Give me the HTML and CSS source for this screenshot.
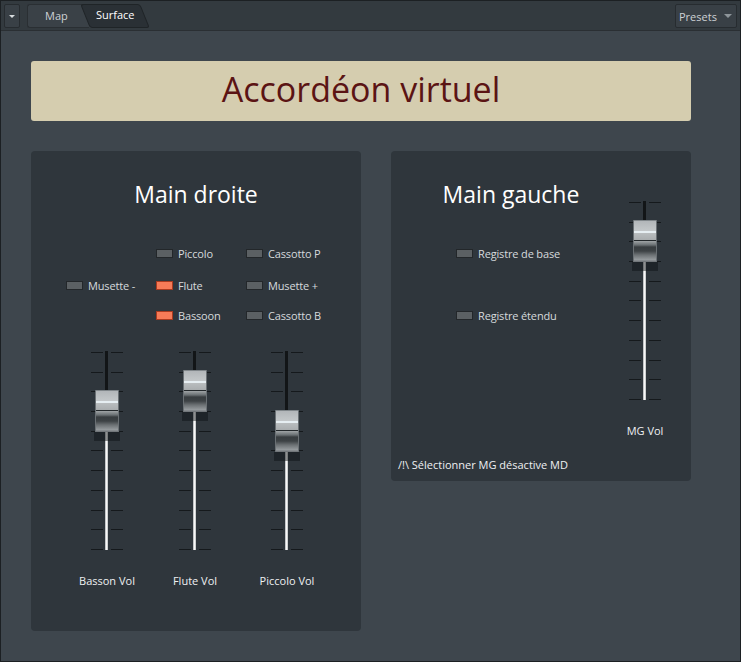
FILE: index.html
```html
<!DOCTYPE html>
<html lang="fr">
<head>
<meta charset="utf-8">
<title>Accordéon virtuel</title>
<link rel="stylesheet" href="styles.css">
</head>
<body>
<div class="window">
  <header class="topbar">
    <button class="menu-btn"><span class="caret"></span></button>
    <nav class="tabs">
      <div class="tab">Map</div>
      <div class="tab active"><span>Surface</span></div>
    </nav>
    <div class="spacer"></div>
    <button class="presets"><span>Presets</span><span class="caret"></span></button>
  </header>

  <main class="main">
    <div class="banner">Accordéon virtuel</div>

    <div class="panels">
      <section class="panel panel-left">
        <h2 class="panel-title">Main droite</h2>
        <div class="switches">
          <div class="sw" style="grid-column:1;grid-row:2"><span class="box"></span>Musette -</div>
          <div class="sw" style="grid-column:2;grid-row:1"><span class="box"></span>Piccolo</div>
          <div class="sw" style="grid-column:2;grid-row:2"><span class="box on"></span>Flute</div>
          <div class="sw" style="grid-column:2;grid-row:3"><span class="box on"></span>Bassoon</div>
          <div class="sw" style="grid-column:3;grid-row:1"><span class="box"></span>Cassotto P</div>
          <div class="sw" style="grid-column:3;grid-row:2"><span class="box"></span>Musette +</div>
          <div class="sw" style="grid-column:3;grid-row:3"><span class="box"></span>Cassotto B</div>
        </div>
        <div class="faders">
          <div class="fader-col">
            <div class="fader">
              <div class="ticks"><i></i><i></i><i></i><i></i><i></i><i></i><i></i><i></i><i></i><i></i><i></i></div>
              <div class="track" style="--v:39px"></div>
              <div class="cap" style="top:39px"></div>
            </div>
            <div class="fader-label">Basson Vol</div>
          </div>
          <div class="fader-col">
            <div class="fader">
              <div class="ticks"><i></i><i></i><i></i><i></i><i></i><i></i><i></i><i></i><i></i><i></i><i></i></div>
              <div class="track" style="--v:19px"></div>
              <div class="cap" style="top:19px"></div>
            </div>
            <div class="fader-label">Flute Vol</div>
          </div>
          <div class="fader-col">
            <div class="fader">
              <div class="ticks"><i></i><i></i><i></i><i></i><i></i><i></i><i></i><i></i><i></i><i></i><i></i></div>
              <div class="track" style="--v:59px"></div>
              <div class="cap" style="top:59px"></div>
            </div>
            <div class="fader-label">Piccolo Vol</div>
          </div>
        </div>
      </section>

      <section class="panel panel-right">
        <div class="right-row">
          <div class="right-main">
            <h2 class="panel-title">Main gauche</h2>
            <div class="switches-mg">
              <div class="sw"><span class="box"></span>Registre de base</div>
              <div class="sw"><span class="box"></span>Registre étendu</div>
            </div>
          </div>
          <div class="fader-col mg">
            <div class="fader">
              <div class="ticks"><i></i><i></i><i></i><i></i><i></i><i></i><i></i><i></i><i></i><i></i><i></i></div>
              <div class="track" style="--v:19px"></div>
              <div class="cap" style="top:19px"></div>
            </div>
            <div class="fader-label">MG Vol</div>
          </div>
        </div>
        <p class="note">/!\ Sélectionner MG désactive MD</p>
      </section>
    </div>
  </main>
</div>
</body>
</html>
```

FILE: styles.css
```css
* { box-sizing: border-box; }

html, body {
  margin: 0;
  padding: 0;
  background: #3e464d;
}

body {
  font-family: "Open Sans", "Noto Sans", "DejaVu Sans", sans-serif;
  color: #e4e7ea;
}

.window {
  width: 741px;
  height: 662px;
  border: 1px solid #1c2023;
  background: #3e464d;
  display: flex;
  flex-direction: column;
}

/* ---------- top bar ---------- */
.topbar {
  height: 30px;
  flex: none;
  background: #333a3f;
  border-bottom: 1px solid #2a2f33;
  display: flex;
  align-items: flex-start;
  padding: 3px 3px 0 3px;
}

.menu-btn {
  width: 16px;
  height: 24px;
  padding: 0;
  margin: 0;
  background: #394046;
  border: 1px solid #272c30;
  border-radius: 2px;
  display: flex;
  align-items: center;
  justify-content: center;
}

.caret {
  width: 0;
  height: 0;
  border-left: 3px solid transparent;
  border-right: 3px solid transparent;
  border-top: 3px solid #d8dcdf;
}

.tabs {
  display: flex;
  margin-left: 7px;
  height: 24px;
}

.tab {
  height: 24px;
  font-size: 11px;
  line-height: 22px;
  color: #cdd1d5;
  position: relative;
}

.tab:first-child {
  width: 62px;
  padding-left: 17px;
  background: #3a4147;
  border: 1px solid #2a2f33;
  border-right: none;
  border-radius: 3px 0 0 3px;
}

.tab.active {
  width: 66px;
  margin-left: -7px;
  padding-left: 14px;
  color: #ffffff;
}

.tab.active::before {
  content: "";
  position: absolute;
  left: 3px;
  right: 3px;
  top: 0;
  bottom: 0;
  background: #2a3035;
  border: 1px solid #1f2427;
  border-radius: 3px;
  transform: skewX(22deg);
}

.tab.active span { position: relative; }

.spacer { flex: 1; }

.presets {
  width: 62px;
  height: 24px;
  margin: 0;
  padding: 0 4px 0 3px;
  background: #394046;
  border: 1px solid #272c30;
  border-radius: 2px;
  display: flex;
  align-items: center;
  justify-content: space-between;
  font-family: inherit;
  font-size: 11px;
  color: #cdd1d5;
}

.presets .caret {
  border-left-width: 4px;
  border-right-width: 4px;
  border-top-width: 4px;
  border-top-color: #8e959a;
}

/* ---------- main ---------- */
.main {
  flex: 1;
  padding: 30px 0 0 30px;
}

.banner {
  width: 660px;
  height: 60px;
  background: #d5cdaf;
  border-radius: 3px;
  color: #5b1414;
  font-size: 34px;
  line-height: 56px;
  text-align: center;
}

.panels {
  display: flex;
  align-items: flex-start;
  gap: 30px;
  margin-top: 30px;
}

.panel {
  background: #2f363c;
  border-radius: 4px;
}

.panel-left {
  width: 330px;
  height: 480px;
  padding-top: 29px;
}

.panel-right {
  width: 300px;
  height: 330px;
}

.panel-title {
  margin: 0;
  font-weight: normal;
  font-size: 23px;
  line-height: 28px;
  color: #ffffff;
  text-align: center;
}

/* ---------- switches ---------- */
.switches {
  display: grid;
  grid-template-columns: 90px 90px 90px;
  grid-template-rows: 32px 32px 28px;
  margin-top: 29px;
  padding-left: 35px;
}

.sw {
  display: flex;
  align-items: center;
  gap: 5px;
  font-size: 11px;
  letter-spacing: -0.15px;
  color: #d6dadd;
  white-space: nowrap;
}

.box {
  width: 17px;
  height: 9px;
  flex: none;
  background: #5b6063;
  border: 1px solid #23272a;
}

.box.on {
  background: #f67b58;
  border-color: #a93a1f;
}

/* ---------- faders ---------- */
.faders {
  display: grid;
  grid-template-columns: 88px 88px 96px;
  margin-top: 22px;
  padding-left: 32px;
}

.fader-col {
  display: flex;
  flex-direction: column;
  align-items: center;
}

.fader {
  position: relative;
  width: 32px;
  height: 200px;
}

.ticks {
  height: 100%;
  padding: 1px 0;
  display: flex;
  flex-direction: column;
  justify-content: space-between;
}

.ticks i {
  display: block;
  height: 1px;
  background: linear-gradient(to right, #15191c 0, #15191c 12px, transparent 12px, transparent 20px, #15191c 20px);
}

.track {
  position: absolute;
  left: 14px;
  top: 0;
  width: 3px;
  height: 199px;
  background:
    linear-gradient(to bottom, #121517 0, #121517 var(--v), transparent var(--v)),
    linear-gradient(to right, #9a9ea1, #ffffff 40%, #f2f2f2 60%, #b5b9bb);
}

.cap {
  position: absolute;
  left: 4px;
  width: 24px;
  height: 42px;
  border-left: 1px solid #6a7074;
  border-right: 1px solid #6a7074;
  background: linear-gradient(to bottom,
    #80868a 0px, #80868a 1px,
    #b2b6b9 1px, #c4c8ca 11px,
    #e6eef2 11px, #e6eef2 13px,
    #b9bdbf 13px, #a9adaf 20px,
    #23282b 20px, #23282b 21px,
    #a0a4a6 21px, #6a7073 25px,
    #383d40 27px, #3d4245 31px,
    #6d7275 35px, #989da0 40px,
    #72777b 41px, #72777b 42px);
}

.cap::after {
  content: "";
  position: absolute;
  top: 100%;
  left: -2px;
  right: -2px;
  height: 9px;
  background: rgba(12, 15, 17, 0.45);
}

.fader-label {
  margin-top: 22px;
  font-size: 11px;
  line-height: 16px;
  color: #eef0f2;
  white-space: nowrap;
}

/* ---------- right panel ---------- */
.right-row {
  display: flex;
}

.right-main {
  width: 222px;
  padding-top: 29px;
  padding-left: 18px;
}

.switches-mg {
  margin-top: 29px;
  margin-left: 47px;
  display: flex;
  flex-direction: column;
  gap: 30px;
}

.switches-mg .sw { height: 32px; }

.fader-col.mg {
  width: 64px;
  padding-top: 50px;
}

.note {
  margin: 18px 0 0 0;
  padding-left: 7px;
  font-size: 11px;
  line-height: 16px;
  color: #eef0f2;
}
```
